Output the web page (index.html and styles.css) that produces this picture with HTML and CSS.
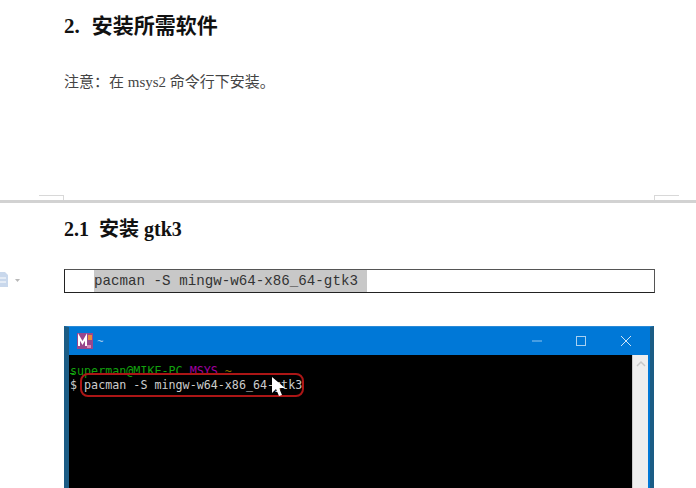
FILE: index.html
```html
<!DOCTYPE html>
<html lang="zh">
<head>
<meta charset="utf-8">
<title>安装所需软件</title>
<link rel="stylesheet" href="styles.css">
</head>
<body>
<section class="page page-top">
  <h1 class="h1"><span class="num">2.</span>安装所需软件</h1>
  <p class="note">注意：在 msys2 命令行下安装。</p>
</section>
<div class="break">
  <span class="crop crop-left"></span>
  <span class="crop crop-right"></span>
</div>
<section class="page page-bottom">
  <h2 class="h2"><span class="num2">2.1</span>安装 gtk3</h2>
  <div class="code-row">
    <svg class="doc-icon" width="24" height="20" viewBox="0 0 24 20">
      <path d="M0 3h5l3 3v12H0z" fill="#c9d8ec"/>
      <path d="M0 9h6M0 13h6" stroke="#fff" stroke-width="1"/>
      <path d="M15 10h5l-2.500 3z" fill="#b8b8b8"/>
    </svg>
    <div class="code-box"><span class="code-sel">pacman -S mingw-w64-x86_64-gtk3</span></div>
  </div>
  <div class="terminal">
    <div class="titlebar">
      <svg class="app-icon" width="16" height="16" viewBox="0 0 16 16">
        <rect width="16" height="16" fill="#98478c"/>
        <path d="M2 13V4l3.500 6L9 4v9" fill="none" stroke="#fff" stroke-width="2"/>
        <path d="M11 2h4v5h-4z" fill="#e88a3c"/>
        <path d="M10 12h4v3h-4z" fill="#d88ab8"/>
      </svg>
      <span class="tilde">~</span>
      <svg class="controls" width="100" height="12" viewBox="0 0 100 12">
        <path d="M0 6h10" stroke="#8ec3ee" stroke-width="1"/>
        <rect x="44.500" y="1.500" width="9" height="9" fill="none" stroke="#a9d0f0" stroke-width="1"/>
        <path d="M89 1l10 10M99 1L89 11" stroke="#cfe4f6" stroke-width="1"/>
      </svg>
    </div>
    <div class="term-body">
      <div class="screen">
        <div class="prompt"><span class="green">superman@MIKE-PC</span> <span class="purple">MSYS</span> <span class="tan">~</span></div>
        <div class="cmd"><span class="dollar">$</span> pacman -S mingw-w64-x86_64-gtk3</div>
        <span class="ring"></span>
        <svg class="cursor" width="16" height="21" viewBox="0 0 16 21">
          <path d="M1 1v16l4-4 3 7 3-1-3-7h6z" fill="#fff"/>
        </svg>
      </div>
      <div class="scrollbar">
        <svg width="16" height="8" viewBox="0 0 16 8"><path d="M4 6l4-4 4 4" fill="none" stroke="#c8c8c8" stroke-width="1.500"/></svg>
      </div>
    </div>
  </div>
</section>
</body>
</html>
```

FILE: styles.css
```css
html, body {
  margin: 0;
  padding: 0;
  background: #fff;
  overflow: hidden;
  height: 488px;
}
body {
  font-family: "Liberation Serif", "Noto Sans CJK SC", serif;
  color: #222;
}
.page {
  padding: 0 41px 0 64px;
}
.page-top {
  height: 200px;
  padding-top: 14px;
  box-sizing: border-box;
}
.h1 {
  margin: 0;
  font-size: 21px;
  line-height: 24px;
  font-weight: 700;
  color: #111;
}
.num { margin-right: 12px; }
.note {
  margin: 34px 0 0;
  font-size: 15px;
  line-height: 20px;
  font-weight: 400;
  color: #444;
}
.break {
  position: relative;
  height: 3px;
  background: #d2d2d2;
}
.crop {
  position: absolute;
  top: -5px;
  width: 25px;
  height: 5px;
  border-top: 1px solid #d8d8d8;
  box-sizing: border-box;
}
.crop-left { left: 39px; border-right: 1px solid #d8d8d8; }
.crop-right { left: 654px; border-left: 1px solid #d8d8d8; }
.h2 {
  margin: 0;
  padding-top: 14px;
  font-size: 20px;
  line-height: 24px;
  font-weight: 700;
  color: #111;
}
.num2 { margin-right: 10px; }
.code-row {
  position: relative;
  margin-top: 28px;
}
.doc-icon {
  position: absolute;
  left: 0;
  margin-left: -64px;
  top: 0;
}
.code-box {
  height: 24px;
  box-sizing: border-box;
  border: 1px solid #555;
  border-bottom-color: #222;
  border-left-color: #222;
  padding-left: 29px;
  display: flex;
}
.code-sel {
  background: #c8c8c8;
  font-family: "Liberation Mono", monospace;
  font-size: 14.200px;
  line-height: 22px;
  color: #333;
  padding-right: 9px;
}
.terminal {
  margin-top: 33px;
  margin-right: 1px;
  height: 163px;
  box-sizing: border-box;
  background: #0078d7;
  border-top: 1px solid #2a8ad6;
  border-left: 5px solid #1b5c85;
  border-right: 4px solid #1b5c85;
  display: flex;
  flex-direction: column;
}
.titlebar {
  height: 28px;
  display: flex;
  align-items: center;
  padding-left: 8px;
  flex: none;
}
.app-icon { flex: none; }
.tilde {
  font-family: "Liberation Sans", sans-serif;
  font-size: 11px;
  color: #b8d8f2;
  margin-left: 4px;
}
.controls {
  margin-left: auto;
  margin-right: 18px;
}
.term-body {
  flex: 1;
  display: flex;
  padding-right: 2px;
  min-height: 0;
}
.screen {
  flex: 1;
  background: #000;
  position: relative;
  padding: 9px 0 0 1px;
  font-family: "DejaVu Sans Mono", monospace;
  font-size: 11.700px;
  line-height: 14px;
  color: #ccc;
}
.prompt { white-space: pre; height: 14px; }
.green { color: #13a10e; text-decoration: underline; text-underline-offset: -2px; }
.purple { color: #a000a0; text-decoration: underline; text-underline-offset: -2px; }
.tan { color: #807000; }
.cmd { white-space: pre; }
.ring {
  position: absolute;
  left: 11px;
  top: 18px;
  width: 224px;
  height: 24px;
  box-sizing: border-box;
  border: 2px solid #ac1616;
  border-radius: 8px;
}
.cursor {
  position: absolute;
  left: 202px;
  top: 21px;
}
.scrollbar {
  width: 16px;
  flex: none;
  background: #eeeeee;
  border-left: 1px solid #ccc;
  box-sizing: border-box;
  padding-top: 5px;
  line-height: 0;
}
```
